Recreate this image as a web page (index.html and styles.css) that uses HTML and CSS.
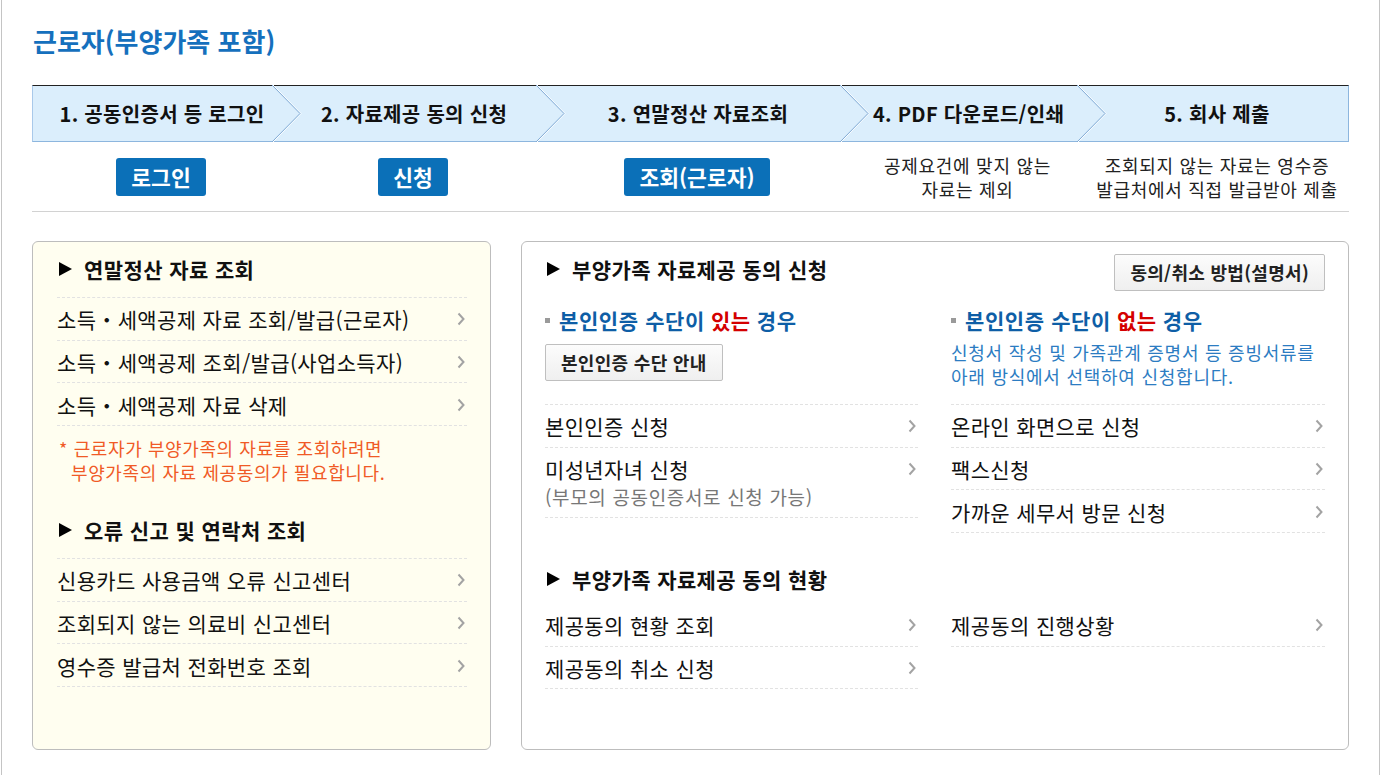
FILE: index.html
```html
<!DOCTYPE html>
<html lang="ko">
<head>
<meta charset="utf-8">
<title>근로자(부양가족 포함)</title>
<link rel="stylesheet" href="styles.css">
</head>
<body>
<div class="page">
  <h1 class="title">근로자(부양가족 포함)</h1>

  <div class="steps">
    <div class="step s1">1. 공동인증서 등 로그인<svg class="chev" width="32" height="57" viewBox="0 0 32 57"><polyline points="2,0 30,28.5 2,57" fill="none" stroke="#ffffff" stroke-width="1"/><polyline points="1,0 29,28.5 1,57" fill="none" stroke="#7fa9d4" stroke-width="1"/></svg></div>
    <div class="step s2">2. 자료제공 동의 신청<svg class="chev" width="32" height="57" viewBox="0 0 32 57"><polyline points="2,0 30,28.5 2,57" fill="none" stroke="#ffffff" stroke-width="1"/><polyline points="1,0 29,28.5 1,57" fill="none" stroke="#7fa9d4" stroke-width="1"/></svg></div>
    <div class="step s3">3. 연말정산 자료조회<svg class="chev" width="32" height="57" viewBox="0 0 32 57"><polyline points="2,0 30,28.5 2,57" fill="none" stroke="#ffffff" stroke-width="1"/><polyline points="1,0 29,28.5 1,57" fill="none" stroke="#7fa9d4" stroke-width="1"/></svg></div>
    <div class="step s4">4. PDF 다운로드/인쇄<svg class="chev" width="32" height="57" viewBox="0 0 32 57"><polyline points="2,0 30,28.5 2,57" fill="none" stroke="#ffffff" stroke-width="1"/><polyline points="1,0 29,28.5 1,57" fill="none" stroke="#7fa9d4" stroke-width="1"/></svg></div>
    <div class="step s5">5. 회사 제출</div>
  </div>

  <div class="actions">
    <div class="act"><a class="btn-blue">로그인</a></div>
    <div class="act"><a class="btn-blue">신청</a></div>
    <div class="act"><a class="btn-blue">조회(근로자)</a></div>
    <div class="act"><p class="act-note">공제요건에 맞지 않는<br>자료는 제외</p></div>
    <div class="act last"><p class="act-note">조회되지 않는 자료는 영수증<br>발급처에서 직접 발급받아 제출</p></div>
  </div>

  <div class="panels">
    <section class="panel panel-left">
      <h2 class="sec-title"><span class="tri"></span>연말정산 자료 조회</h2>
      <ul class="links">
        <li><span>소득・세액공제 자료 조회/발급(근로자)</span><svg class="arr" width="8" height="14" viewBox="0 0 8 14"><polyline points="1.5,1.5 6.5,7 1.5,12.5" fill="none" stroke="#a3a3a3" stroke-width="2"/></svg></li>
        <li><span>소득・세액공제 조회/발급(사업소득자)</span><svg class="arr" width="8" height="14" viewBox="0 0 8 14"><polyline points="1.5,1.5 6.5,7 1.5,12.5" fill="none" stroke="#a3a3a3" stroke-width="2"/></svg></li>
        <li><span>소득・세액공제 자료 삭제</span><svg class="arr" width="8" height="14" viewBox="0 0 8 14"><polyline points="1.5,1.5 6.5,7 1.5,12.5" fill="none" stroke="#a3a3a3" stroke-width="2"/></svg></li>
      </ul>
      <p class="warn">* 근로자가 부양가족의 자료를 조회하려면<br>부양가족의 자료 제공동의가 필요합니다.</p>

      <h2 class="sec-title sec-2"><span class="tri"></span>오류 신고 및 연락처 조회</h2>
      <ul class="links">
        <li><span>신용카드 사용금액 오류 신고센터</span><svg class="arr" width="8" height="14" viewBox="0 0 8 14"><polyline points="1.5,1.5 6.5,7 1.5,12.5" fill="none" stroke="#a3a3a3" stroke-width="2"/></svg></li>
        <li><span>조회되지 않는 의료비 신고센터</span><svg class="arr" width="8" height="14" viewBox="0 0 8 14"><polyline points="1.5,1.5 6.5,7 1.5,12.5" fill="none" stroke="#a3a3a3" stroke-width="2"/></svg></li>
        <li><span>영수증 발급처 전화번호 조회</span><svg class="arr" width="8" height="14" viewBox="0 0 8 14"><polyline points="1.5,1.5 6.5,7 1.5,12.5" fill="none" stroke="#a3a3a3" stroke-width="2"/></svg></li>
      </ul>
    </section>

    <section class="panel panel-right">
      <div class="rp-head">
        <h2 class="sec-title"><span class="tri"></span>부양가족 자료제공 동의 신청</h2>
        <a class="btn-gray">동의/취소 방법(설명서)</a>
      </div>

      <div class="rp-grid">
        <h3 class="sub"><span class="sq"></span>본인인증 수단이 <em>있는</em> 경우</h3>
        <h3 class="sub"><span class="sq"></span>본인인증 수단이 <em>없는</em> 경우</h3>
        <div class="mid-btn"><a class="btn-gray">본인인증 수단 안내</a></div>
        <p class="desc">신청서 작성 및 가족관계 증명서 등 증빙서류를<br>아래 방식에서 선택하여 신청합니다.</p>
        <ul class="links">
          <li><span>본인인증 신청</span><svg class="arr" width="8" height="14" viewBox="0 0 8 14"><polyline points="1.5,1.5 6.5,7 1.5,12.5" fill="none" stroke="#a3a3a3" stroke-width="2"/></svg></li>
          <li class="two"><span>미성년자녀 신청<small>(부모의 공동인증서로 신청 가능)</small></span><svg class="arr" width="8" height="14" viewBox="0 0 8 14"><polyline points="1.5,1.5 6.5,7 1.5,12.5" fill="none" stroke="#a3a3a3" stroke-width="2"/></svg></li>
        </ul>
        <ul class="links">
          <li><span>온라인 화면으로 신청</span><svg class="arr" width="8" height="14" viewBox="0 0 8 14"><polyline points="1.5,1.5 6.5,7 1.5,12.5" fill="none" stroke="#a3a3a3" stroke-width="2"/></svg></li>
          <li><span>팩스신청</span><svg class="arr" width="8" height="14" viewBox="0 0 8 14"><polyline points="1.5,1.5 6.5,7 1.5,12.5" fill="none" stroke="#a3a3a3" stroke-width="2"/></svg></li>
          <li><span>가까운 세무서 방문 신청</span><svg class="arr" width="8" height="14" viewBox="0 0 8 14"><polyline points="1.5,1.5 6.5,7 1.5,12.5" fill="none" stroke="#a3a3a3" stroke-width="2"/></svg></li>
        </ul>
      </div>

      <h2 class="sec-title sec-status"><span class="tri"></span>부양가족 자료제공 동의 현황</h2>
      <div class="rp-grid2">
        <ul class="links">
          <li><span>제공동의 현황 조회</span><svg class="arr" width="8" height="14" viewBox="0 0 8 14"><polyline points="1.5,1.5 6.5,7 1.5,12.5" fill="none" stroke="#a3a3a3" stroke-width="2"/></svg></li>
          <li><span>제공동의 취소 신청</span><svg class="arr" width="8" height="14" viewBox="0 0 8 14"><polyline points="1.5,1.5 6.5,7 1.5,12.5" fill="none" stroke="#a3a3a3" stroke-width="2"/></svg></li>
        </ul>
        <ul class="links">
          <li><span>제공동의 진행상황</span><svg class="arr" width="8" height="14" viewBox="0 0 8 14"><polyline points="1.5,1.5 6.5,7 1.5,12.5" fill="none" stroke="#a3a3a3" stroke-width="2"/></svg></li>
        </ul>
      </div>
    </section>
  </div>
</div>
</body>
</html>
```
FILE: styles.css
```css
* { box-sizing: border-box; }
html, body { margin: 0; padding: 0; background: #fff; }
body {
  font-family: "Noto Sans CJK KR", "Noto Sans", sans-serif;
  color: #111;
}
.page {
  margin-left: 1px;
  width: 1379px;
  height: 775px;
  border-left: 1px solid #c4c4c4;
  border-right: 1px solid #c4c4c4;
  padding: 24px 30px 0 30px;
}
.title {
  margin: 0 0 0 1px;
  font-size: 26px;
  line-height: 34px;
  font-weight: 700;
  color: #1570bd;
  letter-spacing: 0;
}
/* steps */
.steps {
  margin-top: 27px;
  display: grid;
  grid-template-columns: 240px 264px 304px 237px 1fr;
  height: 57px;
  background: #dbeefc;
  border-top: 1px solid #222;
  border-bottom: 1px solid #8db6de;
  border-left: 1px solid #a9c9ea;
  border-right: 1px solid #8db6de;
}
.step {
  position: relative;
  display: flex;
  align-items: center;
  justify-content: center;
  padding-left: 18px;
  font-size: 20px;
  font-weight: 700;
  color: #111;
  letter-spacing: 0.3px;
  white-space: nowrap;
}
.step.s5 { padding-left: 8px; }
.chev {
  position: absolute;
  right: -30px;
  top: -1px;
  z-index: 1;
}
/* action row */
.actions {
  display: grid;
  grid-template-columns: 240px 264px 304px 237px 1fr;
  height: 70px;
  border-bottom: 1px solid #d2d2d2;
}
.act {
  display: flex;
  align-items: center;
  justify-content: center;
  padding-left: 18px;
}
.act.last { padding-left: 8px; }
.btn-blue {
  display: inline-block;
  height: 38px;
  line-height: 38px;
  padding: 0 15px;
  background: #0b70b8;
  color: #fff;
  font-size: 21.5px;
  font-weight: 700;
  border-radius: 3px;
}
.act-note {
  margin: 0;
  text-align: center;
  font-size: 18px;
  line-height: 24px;
  color: #222;
  letter-spacing: 0.7px;
  white-space: nowrap;
}
/* panels */
.panels {
  margin-top: 29px;
  display: flex;
  gap: 30px;
}
.panel {
  height: 509px;
  border: 1px solid #bdbdbd;
  border-radius: 6px;
}
.panel-left {
  width: 459px;
  background: #fffef0;
  padding: 13px 23px 0 24px;
}
.panel-right {
  flex: 1;
  background: #fff;
  padding: 12px 23px 0 23px;
}
.sec-title {
  display: flex;
  align-items: center;
  margin: 0 0 14px 2px;
  font-size: 21px;
  line-height: 28px;
  font-weight: 700;
  color: #111;
  letter-spacing: 0.4px;
  white-space: nowrap;
}
.tri {
  flex: none;
  display: inline-block;
  width: 0;
  height: 0;
  border-top: 7px solid transparent;
  border-bottom: 7px solid transparent;
  border-left: 13px solid #000;
  margin-right: 12px;
}
.links {
  list-style: none;
  margin: 0;
  padding: 0;
  border-top: 1px dashed #e2e2e2;
}
.links li {
  display: flex;
  align-items: center;
  justify-content: space-between;
  height: 42.67px;
  padding-top: 1px;
  border-bottom: 1px dashed #e2e2e2;
  font-size: 21px;
  line-height: 28px;
  color: #111;
  letter-spacing: 0.35px;
}
.links li span { white-space: nowrap; }
.arr { flex: none; margin-right: 2px; }
.warn {
  margin: 10px 0 0 2px;
  font-size: 18px;
  line-height: 24px;
  color: #f05a26;
  padding-left: 12px;
  text-indent: -12px;
  letter-spacing: 0.6px;
  white-space: nowrap;
}
.sec-2 { margin-top: 32px; }
/* right panel */
.rp-head {
  display: flex;
  justify-content: space-between;
  align-items: flex-start;
}
.rp-head .sec-title { margin: 1px 0 0 2px; }
.btn-gray {
  display: inline-block;
  height: 37px;
  line-height: 35px;
  padding: 0 15px;
  background: linear-gradient(#fcfcfc, #efefef);
  border: 1px solid #bfbfbf;
  border-radius: 2px;
  font-size: 18px;
  font-weight: 700;
  color: #222;
  letter-spacing: 0.3px;
  white-space: nowrap;
}
.rp-grid {
  display: grid;
  grid-template-columns: 373px 374px;
  column-gap: 33px;
  margin-top: 14px;
}
.sub {
  display: flex;
  align-items: center;
  margin: 0;
  font-size: 21px;
  line-height: 30px;
  font-weight: 700;
  color: #0e5ea6;
  letter-spacing: 0.6px;
  white-space: nowrap;
}
.sub em { font-style: normal; color: #d40000; margin: 0 6px; }
.sq {
  flex: none;
  display: inline-block;
  width: 5px;
  height: 5px;
  background: #9a9a9a;
  margin-right: 9px;
}
.mid-btn { margin-top: 9px; }
.desc {
  margin: 5px 0 16px 0;
  font-size: 18px;
  line-height: 24px;
  color: #2c7cc2;
  letter-spacing: 0.75px;
  white-space: nowrap;
}
.links li.two {
  height: 70px;
  align-items: flex-start;
  padding-top: 7px;
}
.links li.two .arr { margin-top: 7px; }
.links li small {
  display: block;
  font-size: 19px;
  line-height: 28px;
  color: #777;
  letter-spacing: 0.65px;
}
.sec-status { margin: 32px 0 11px 2px; }
.rp-grid2 {
  display: grid;
  grid-template-columns: 373px 374px;
  column-gap: 33px;
}
.rp-grid2 .links { border-top: none; }
```
